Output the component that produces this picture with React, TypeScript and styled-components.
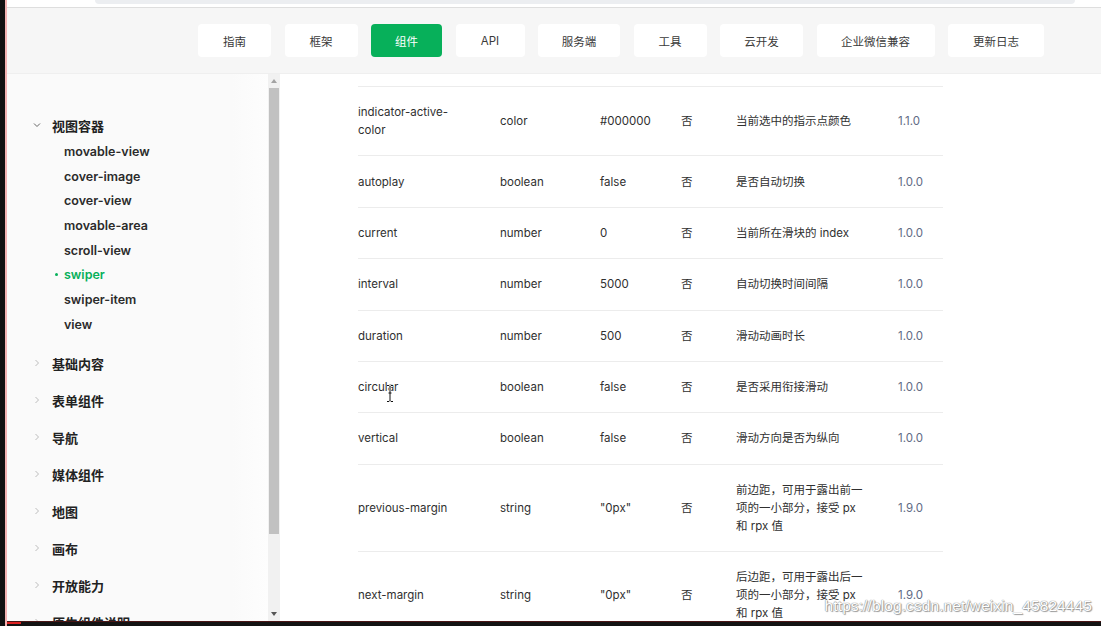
import React from "react";
import styled, { createGlobalStyle } from "styled-components";

const Global = createGlobalStyle`
  html, body { margin: 0; padding: 0; }
  body { width: 1101px; height: 626px; overflow: hidden; background: #fff;
    font-family: "Inter", "Noto Sans CJK SC", sans-serif; }
  * { box-sizing: border-box; }
`;

const Screen = styled.div`
  position: relative;
  display: flex;
  width: 1101px;
  height: 626px;
  overflow: hidden;
  background: #fff;
`;

const LeftFrame = styled.div`
  flex: 0 0 7px;
  display: flex;
  background: #111;
  &::after {
    content: "";
    margin-left: 5px;
    width: 2px;
    background: #f3b2b2;
  }
`;

const Page = styled.div`
  flex: 1;
  display: flex;
  flex-direction: column;
  min-width: 0;
`;

const TopStrip = styled.div`
  height: 8px;
  flex: 0 0 8px;
  background: #fff;
  border-bottom: 1px solid #dedede;
  display: flex;
`;

const SearchEdge = styled.div`
  margin-left: 88px;
  width: 980px;
  height: 4px;
  background: #eceef1;
  border-radius: 0 0 6px 6px;
`;

const Header = styled.div`
  flex: 0 0 66px;
  background: #f6f6f6;
  border-bottom: 1px solid #efefef;
  display: flex;
  align-items: center;
  padding-left: 191px;
  gap: 13.5px;
`;

const NavButton = styled.div<{ $w: number; $active?: boolean }>`
  width: ${(p) => p.$w}px;
  height: 33px;
  border-radius: 4px;
  display: flex;
  align-items: center;
  justify-content: center;
  font-size: 11.5px;
  color: ${(p) => (p.$active ? "#fff" : "#3a3a3a")};
  background: ${(p) => (p.$active ? "#07b05a" : "#fff")};
`;

const Body = styled.div`
  flex: 1;
  display: flex;
  min-height: 0;
`;

const Sidebar = styled.div`
  flex: 0 0 261px;
  background: linear-gradient(90deg, #fafafa 0%, #fafafa 86%, #fdfdfd 100%);
  padding-top: 37px;
  overflow: hidden;
`;

const GroupHead = styled.div<{ $h: number }>`
  display: flex;
  align-items: center;
  height: ${(p) => p.$h}px;
  padding-left: 25px;
  font-size: 13px;
  font-weight: 700;
  color: #222;
`;

const Chevron = styled.svg`
  width: 10px;
  height: 10px;
  margin-right: 10px;
  flex: 0 0 10px;
`;

const SubList = styled.div`
  margin-bottom: 8px;
`;

const SubItem = styled.div<{ $active?: boolean }>`
  position: relative;
  height: 24.7px;
  display: flex;
  align-items: center;
  padding-left: 57px;
  font-size: 12.5px;
  font-weight: 600;
  color: ${(p) => (p.$active ? "#07b05a" : "#2b2b2b")};
  &::before {
    content: "";
    display: ${(p) => (p.$active ? "block" : "none")};
    position: absolute;
    left: 48px;
    top: 11px;
    width: 3px;
    height: 3px;
    border-radius: 50%;
    background: #07b05a;
  }
`;

const ScrollTrack = styled.div`
  flex: 0 0 12px;
  background: #f1f1f1;
  display: flex;
  flex-direction: column;
  align-items: center;
`;

const ScrollArrow = styled.div<{ $down?: boolean }>`
  flex: 0 0 14px;
  display: flex;
  align-items: center;
  justify-content: center;
  &::after {
    content: "";
    border-left: 3.5px solid transparent;
    border-right: 3.5px solid transparent;
    ${(p) =>
      p.$down
        ? "border-top: 4px solid #555;"
        : "border-bottom: 4px solid #a3a3a3;"}
  }
`;

const ScrollThumb = styled.div`
  width: 10px;
  height: 446px;
  background: #c1c1c1;
`;

const ScrollRest = styled.div`
  flex: 1;
`;

const Main = styled.div`
  flex: 1;
  background: #fff;
  padding: 12px 0 0 78px;
  overflow: hidden;
`;

const Table = styled.div`
  width: 585px;
`;

const Row = styled.div`
  display: grid;
  grid-template-columns: 142px 100px 81px 55px 162px 45px;
  align-items: center;
  border-top: 1px solid #ececec;
  padding: 16.2px 0;
  font-size: 11.5px;
  line-height: 18px;
  color: #303030;
`;

const Cell = styled.div<{ $pr?: number; $muted?: boolean }>`
  padding-right: ${(p) => p.$pr ?? 8}px;
  color: ${(p) => (p.$muted ? "#5f6a84" : "inherit")};
`;

const BottomBar = styled.div`
  flex: 0 0 5px;
  background: #131313;
  border-top: 1px solid #4a1616;
  display: flex;
  &::before {
    content: "";
    width: 14px;
    height: 2px;
    background: #d22;
  }
`;

const Watermark = styled.div`
  position: absolute;
  right: 9px;
  top: 597px;
  font-family: "Liberation Sans", Arial, sans-serif;
  font-size: 15.5px;
  color: #fff;
  text-shadow: 0 0 1px #8a8a8a, 0 0 1px #8a8a8a, 1px 1px 1px #9a9a9a;
  letter-spacing: 0.1px;
`;

const Cursor = styled.svg`
  position: absolute;
  left: 385px;
  top: 384px;
  width: 10px;
  height: 19px;
`;

const navItems = [
  { t: "指南", w: 73 },
  { t: "框架", w: 73 },
  { t: "组件", w: 71, active: true },
  { t: "API", w: 69 },
  { t: "服务端", w: 82 },
  { t: "工具", w: 73 },
  { t: "云开发", w: 83 },
  { t: "企业微信兼容", w: 118 },
  { t: "更新日志", w: 96 },
];

const subItems = [
  "movable-view",
  "cover-image",
  "cover-view",
  "movable-area",
  "scroll-view",
  "swiper",
  "swiper-item",
  "view",
];

const groups = ["基础内容", "表单组件", "导航", "媒体组件", "地图", "画布", "开放能力", "原生组件说明"];

const rows = [
  { n: "indicator-active-color", t: "color", d: "#000000", r: "否", s: "当前选中的指示点颜色", v: "1.1.0" },
  { n: "autoplay", t: "boolean", d: "false", r: "否", s: "是否自动切换", v: "1.0.0" },
  { n: "current", t: "number", d: "0", r: "否", s: "当前所在滑块的 index", v: "1.0.0" },
  { n: "interval", t: "number", d: "5000", r: "否", s: "自动切换时间间隔", v: "1.0.0" },
  { n: "duration", t: "number", d: "500", r: "否", s: "滑动动画时长", v: "1.0.0" },
  { n: "circular", t: "boolean", d: "false", r: "否", s: "是否采用衔接滑动", v: "1.0.0" },
  { n: "vertical", t: "boolean", d: "false", r: "否", s: "滑动方向是否为纵向", v: "1.0.0" },
  { n: "previous-margin", t: "string", d: "\"0px\"", r: "否", s: "前边距，可用于露出前一项的一小部分，接受 px 和 rpx 值", v: "1.9.0" },
  { n: "next-margin", t: "string", d: "\"0px\"", r: "否", s: "后边距，可用于露出后一项的一小部分，接受 px 和 rpx 值", v: "1.9.0" },
];

const Down = () => (
  <Chevron viewBox="0 0 10 10">
    <path d="M2 3.5 L5 6.5 L8 3.5" fill="none" stroke="#666" strokeWidth="1" />
  </Chevron>
);
const Right = () => (
  <Chevron viewBox="0 0 10 10">
    <path d="M3.5 2 L6.5 5 L3.5 8" fill="none" stroke="#bdbdbd" strokeWidth="1" />
  </Chevron>
);

export default function App() {
  return (
    <Screen>
      <Global />
      <LeftFrame />
      <Page>
        <TopStrip>
          <SearchEdge />
        </TopStrip>
        <Header>
          {navItems.map((n) => (
            <NavButton key={n.t} $w={n.w} $active={n.active}>
              {n.t}
            </NavButton>
          ))}
        </Header>
        <Body>
          <Sidebar>
            <GroupHead $h={28}>
              <Down />
              视图容器
            </GroupHead>
            <SubList>
              {subItems.map((s) => (
                <SubItem key={s} $active={s === "swiper"}>
                  {s}
                </SubItem>
              ))}
            </SubList>
            {groups.map((g) => (
              <GroupHead key={g} $h={37}>
                <Right />
                {g}
              </GroupHead>
            ))}
          </Sidebar>
          <ScrollTrack>
            <ScrollArrow />
            <ScrollThumb />
            <ScrollRest />
            <ScrollArrow $down />
          </ScrollTrack>
          <Main>
            <Table>
              {rows.map((r) => (
                <Row key={r.n}>
                  <Cell $pr={32}>{r.n}</Cell>
                  <Cell>{r.t}</Cell>
                  <Cell>{r.d}</Cell>
                  <Cell>{r.r}</Cell>
                  <Cell $pr={30}>{r.s}</Cell>
                  <Cell $muted $pr={0}>{r.v}</Cell>
                </Row>
              ))}
            </Table>
          </Main>
        </Body>
        <BottomBar />
      </Page>
      <Cursor viewBox="0 0 10 19">
        <path
          d="M2 1.5 H4 L5 2.5 L6 1.5 H8 M5 2.5 V16.5 M2 17.5 H4 L5 16.5 L6 17.5 H8 M3.5 9 H6.5"
          fill="none"
          stroke="#fff"
          strokeWidth="2.4"
        />
        <path
          d="M2 1.5 H4 L5 2.5 L6 1.5 H8 M5 2.5 V16.5 M2 17.5 H4 L5 16.5 L6 17.5 H8 M3.5 9 H6.5"
          fill="none"
          stroke="#111"
          strokeWidth="1"
        />
      </Cursor>
      <Watermark>https://blog.csdn.net/weixin_45824445</Watermark>
    </Screen>
  );
}
